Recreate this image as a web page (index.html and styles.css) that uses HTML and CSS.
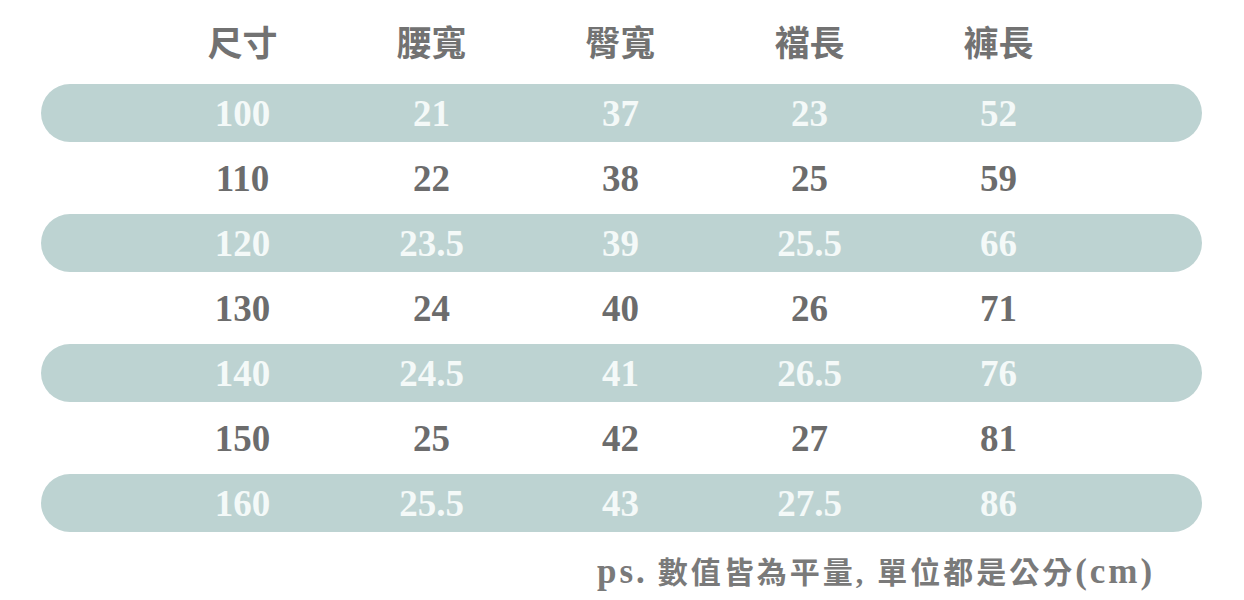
FILE: index.html
```html
<!DOCTYPE html>
<html lang="zh-Hant">
<head>
<meta charset="utf-8">
<title>尺寸表</title>
<link rel="stylesheet" href="styles.css">
</head>
<body>
<div class="chart">
  <div class="row head">
    <div>尺寸</div><div>腰寬</div><div>臀寬</div><div>襠長</div><div>褲長</div>
  </div>
  <div class="row band"><div>100</div><div>21</div><div>37</div><div>23</div><div>52</div></div>
  <div class="row plain"><div>110</div><div>22</div><div>38</div><div>25</div><div>59</div></div>
  <div class="row band"><div>120</div><div>23.5</div><div>39</div><div>25.5</div><div>66</div></div>
  <div class="row plain"><div>130</div><div>24</div><div>40</div><div>26</div><div>71</div></div>
  <div class="row band"><div>140</div><div>24.5</div><div>41</div><div>26.5</div><div>76</div></div>
  <div class="row plain"><div>150</div><div>25</div><div>42</div><div>27</div><div>81</div></div>
  <div class="row band"><div>160</div><div>25.5</div><div>43</div><div>27.5</div><div>86</div></div>
  <p class="note"><span class="latin">ps.</span> 數值皆為平量<span class="comma">,</span>單位都是公分<span class="latin">(cm)</span></p>
</div>
</body>
</html>
```

FILE: styles.css
```css
html, body {
  margin: 0;
  padding: 0;
  background: #ffffff;
}

.chart {
  width: 1244px;
  height: 600px;
  padding-left: 41px;
  box-sizing: border-box;
}

.row {
  width: 1161px;
  display: grid;
  grid-template-columns: repeat(5, 189px);
  padding-left: 107px;
  box-sizing: border-box;
  align-items: center;
  text-align: center;
  font-family: "Liberation Serif", "Times New Roman", serif;
  font-weight: 700;
  font-size: 37px;
}

.head {
  height: 84px;
  font-family: "Noto Sans CJK TC", "Noto Sans CJK SC", sans-serif;
  font-weight: 700;
  font-size: 35px;
  color: #727272;
  padding-bottom: 4px;
}

.band {
  height: 58px;
  background: #bdd3d2;
  border-radius: 29px;
  color: #f4f9f8;
}

.plain {
  height: 72px;
  color: #6c6c6c;
}

.note {
  margin: 0;
  padding-left: 556px;
  padding-top: 18px;
  font-family: "Noto Sans CJK TC", "Noto Sans CJK SC", sans-serif;
  font-weight: 700;
  font-size: 30px;
  letter-spacing: 3px;
  line-height: 40px;
  color: #7a7a7a;
}

.note .latin {
  font-family: "Liberation Serif", "Times New Roman", serif;
  font-size: 35px;
  letter-spacing: 3px;
}

.note .comma {
  font-family: "Liberation Serif", serif;
  letter-spacing: 14px;
}
```
